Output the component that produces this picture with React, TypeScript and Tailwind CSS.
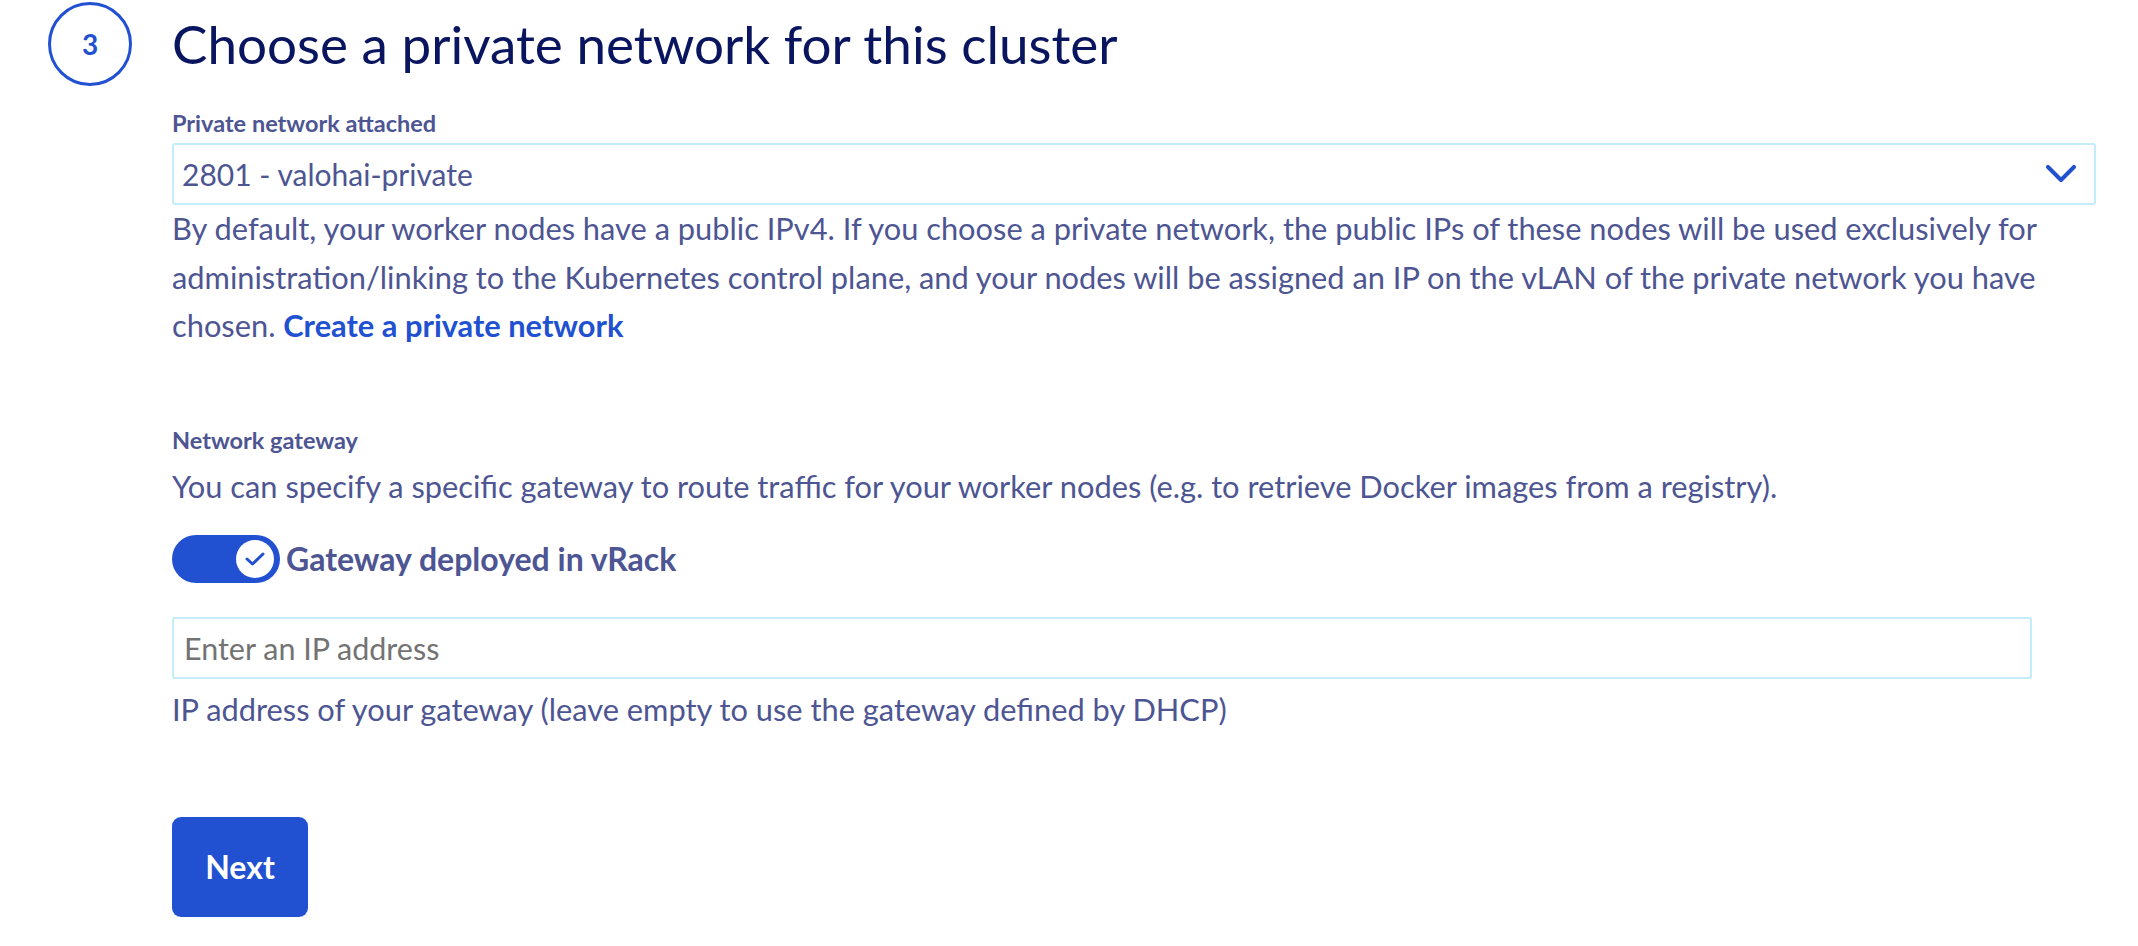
import React from 'react';

const font = { fontFamily: 'Lato, "Noto Sans", sans-serif' };

function Chevron() {
  return (
    <svg width="30" height="18" viewBox="0 0 30 18" fill="none">
      <polyline points="2,2 15,15 28,2" stroke="#2151d1" strokeWidth="4" strokeLinecap="round" strokeLinejoin="round" />
    </svg>
  );
}

function Toggle({ on }: { on: boolean }) {
  return (
    <div className={`flex items-center w-[108px] h-[48px] rounded-full px-[6px] ${on ? 'bg-[#2151d1] justify-end' : 'bg-gray-300 justify-start'}`}>
      <div className="w-[38px] h-[38px] rounded-full bg-white flex items-center justify-center">
        {on && (
          <svg width="22" height="16" viewBox="0 0 22 16" fill="none">
            <polyline points="3,8 8.5,13 19,3" stroke="#2151d1" strokeWidth="3" strokeLinecap="round" strokeLinejoin="round" />
          </svg>
        )}
      </div>
    </div>
  );
}

export default function App() {
  return (
    <div className="min-h-screen w-full bg-white text-[#4d5592]" style={font}>
      <div className="flex items-center gap-[40px] pl-[48px] pt-[2px]">
        <div className="w-[84px] h-[84px] rounded-full border-[3.5px] border-[#2151d1] flex items-center justify-center text-[#2151d1] font-bold text-[28px]">
          3
        </div>
        <h2 className="text-[53px] leading-[60px] text-[#0a155f]">Choose a private network for this cluster</h2>
      </div>

      <div className="ml-[172px] w-[1924px]">
        <label className="block mt-[25px] text-[23.5px] leading-[24px] font-bold">Private network attached</label>
        <div className="mt-[8px] h-[62px] border-2 border-[#c3edf9] rounded-[3px] flex items-center justify-between pl-[8px] pr-[18px]">
          <span className="text-[30px]">2801 - valohai-private</span>
          <Chevron />
        </div>
        <p className="text-[30.8px] leading-[48.5px]">
          By default, your worker nodes have a public IPv4. If you choose a private network, the public IPs of these nodes will be used exclusively for administration/linking to the Kubernetes control plane, and your nodes will be assigned an IP on the vLAN of the private network you have chosen.{' '}
          <a href="#" className="font-bold text-[#2151d1]">Create a private network</a>
        </p>

        <label className="block mt-[77px] text-[23.5px] leading-[24px] font-bold">Network gateway</label>
        <p className="mt-[11px] text-[30.8px] leading-[48.5px]">
          You can specify a specific gateway to route traffic for your worker nodes (e.g. to retrieve Docker images from a registry).
        </p>

        <div className="mt-[24px] flex items-center gap-[6px]">
          <Toggle on />
          <span className="text-[32px] font-bold">Gateway deployed in vRack</span>
        </div>

        <input
          placeholder="Enter an IP address"
          className="mt-[34px] block w-[1860px] h-[62px] border-2 border-[#c3edf9] rounded-[3px] px-[10px] text-[30.5px] text-[#4d5592] placeholder:text-[#737373] outline-none"
          style={font}
        />
        <p className="mt-[7px] text-[30.8px] leading-[48.5px]">
          IP address of your gateway (leave empty to use the gateway defined by DHCP)
        </p>

        <button className="mt-[82px] w-[136px] h-[100px] rounded-[9px] bg-[#2151d1] text-white font-bold text-[32px]">
          Next
        </button>
      </div>
    </div>
  );
}
